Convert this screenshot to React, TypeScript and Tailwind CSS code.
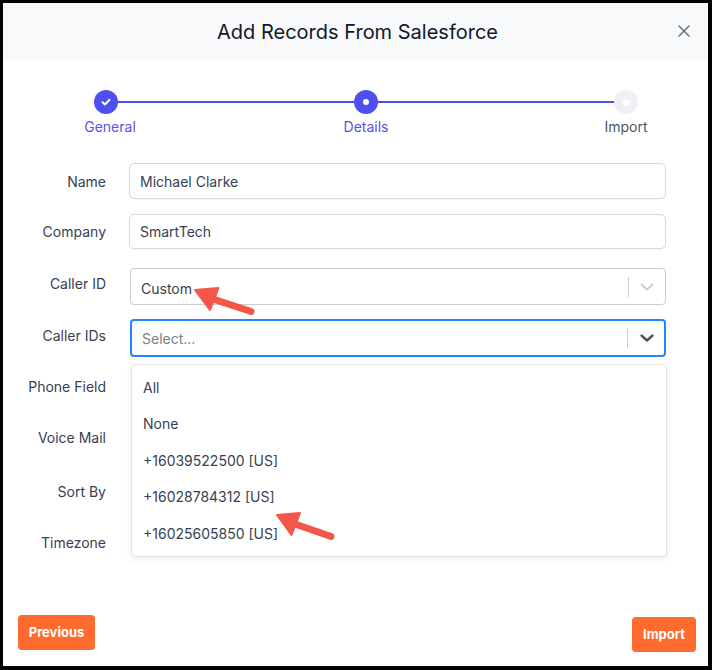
import React from "react";

const font = { fontFamily: "Inter, 'Noto Sans', sans-serif" };

function Chevron({ dark }: { dark?: boolean }) {
  return (
    <svg width="20" height="20" viewBox="0 0 20 20" className={dark ? "text-[#555]" : "text-[#ccc]"}>
      <path
        d="M4.5 7.5 L10 12.5 L15.5 7.5"
        fill="none"
        stroke="currentColor"
        strokeWidth={dark ? 2.4 : 1.8}
        strokeLinecap="round"
        strokeLinejoin="round"
      />
    </svg>
  );
}

function Row({
  label,
  children,
  className,
  labelClass,
}: {
  label: string;
  children?: React.ReactNode;
  className?: string;
  labelClass?: string;
}) {
  return (
    <div className={`grid grid-cols-[103px_1fr] gap-x-[23px] items-center ${className ?? ""}`}>
      <label className={`text-right text-[14px] text-[#374151] ${labelClass ?? ""}`}>{label}</label>
      {children}
    </div>
  );
}

const options = ["All", "None", "+16039522500 [US]", "+16028784312 [US]", "+16025605850 [US]"];

export default function App() {
  return (
    <div style={font} className="w-[712px] h-[670px] bg-black pt-[3px] pl-[3px] pr-[4px] pb-[4px]">
      <div className="relative w-full h-full bg-white flex flex-col">
        {/* Header */}
        <div className="h-[58px] bg-[#f8f9fb] flex items-center justify-center relative shrink-0">
          <h1 className="text-[20px] text-[#111827] pl-[4px]">Add Records From Salesforce</h1>
          <button className="absolute right-[16px] top-[20px] text-[#6b7280]">
            <svg width="16" height="16" viewBox="0 0 16 16">
              <path d="M3 3 L13 13 M13 3 L3 13" stroke="currentColor" strokeWidth="1.5" strokeLinecap="round" />
            </svg>
          </button>
        </div>

        {/* Stepper */}
        <div className="relative mt-[29px] h-[24px] ml-[91px] mr-[70px]">
          <div className="absolute left-[12px] right-[12px] top-[11px] h-[2px] bg-[#4f4ff0]" />
          <div className="relative flex justify-between">
            <div className="w-[24px] h-[24px] rounded-full bg-[#4f4ff0] flex items-center justify-center">
              <svg width="12" height="12" viewBox="0 0 12 12">
                <path d="M2.5 6.2 L5 8.5 L9.5 3.8" fill="none" stroke="white" strokeWidth="2" strokeLinecap="round" strokeLinejoin="round" />
              </svg>
            </div>
            <div className="w-[24px] h-[24px] rounded-full bg-[#4f4ff0] flex items-center justify-center">
              <div className="w-[6px] h-[6px] rounded-full bg-white" />
            </div>
            <div className="w-[24px] h-[24px] rounded-full bg-[#eef0f5] flex items-center justify-center">
              <div className="w-[7px] h-[7px] rounded-full bg-white" />
            </div>
          </div>
        </div>
        <div className="relative h-[20px] mt-[2px] ml-[91px] mr-[70px] text-[14px]">
          <span className="absolute left-[16px] -translate-x-1/2 text-[#5b52e8]">General</span>
          <span className="absolute left-1/2 -translate-x-1/2 text-[#5b52e8]">Details</span>
          <span className="absolute right-[12px] translate-x-1/2 text-[#4b5563]">Import</span>
        </div>

        {/* Form */}
        <div className="mt-[27px] pr-[42px] flex flex-col">
          <Row label="Name">
            <div className="h-[36px] border border-[#d6d9de] rounded-[5px] flex items-center px-[10px] text-[14px] text-[#374151] shadow-[0_1px_1px_rgba(0,0,0,0.04)]">
              Michael Clarke
            </div>
          </Row>
          <Row label="Company" className="mt-[15px]">
            <div className="h-[35px] border border-[#d6d9de] rounded-[5px] flex items-center px-[10px] text-[14px] text-[#374151] shadow-[0_1px_1px_rgba(0,0,0,0.04)]">
              SmartTech
            </div>
          </Row>
          <Row label="Caller ID" className="mt-[19px]" labelClass="-translate-y-[3px]">
            <div className="h-[37px] ml-[1px] border border-[#cccccc] rounded-[4px] flex items-center text-[14px] text-[#374151]">
              <span className="flex-1 px-[10px] pt-[4px]">Custom</span>
              <span className="w-px h-[20px] bg-[#cccccc]" />
              <span className="w-[36px] flex items-center justify-center">
                <Chevron />
              </span>
            </div>
          </Row>
          <Row label="Caller IDs" className="mt-[14px]" labelClass="-translate-y-[3px]">
            <div className="h-[38px] ml-[1px] border-2 border-[#2684ff] rounded-[4px] flex items-center text-[14px]">
              <span className="flex-1 px-[10px] text-[#808080]">Select...</span>
              <span className="w-px h-[20px] bg-[#cccccc]" />
              <span className="w-[36px] flex items-center justify-center pl-[2px]">
                <Chevron dark />
              </span>
            </div>
          </Row>
          <Row label="Phone Field" className="mt-[11px] h-[36px]" />
          <Row label="Voice Mail" className="mt-[15px] h-[36px]" />
          <Row label="Sort By" className="mt-[18px] h-[36px]" />
          <Row label="Timezone" className="mt-[15px] h-[36px]" />
        </div>

        {/* Dropdown menu */}
        <div className="absolute left-[128px] top-[361px] w-[536px] h-[193px] bg-white border border-[#e3e5e8] rounded-[4px] shadow-[0_2px_6px_rgba(0,0,0,0.08)] pt-[4px] pb-[6px]">
          {options.map((o) => (
            <div key={o} className="h-[36.5px] flex items-center px-[11px] text-[14px] text-[#374151]">
              {o}
            </div>
          ))}
        </div>

        {/* Footer */}
        <div className="mt-auto mb-[14px] flex justify-between items-start pl-[15px] pr-[12px]">
          <button className="w-[77px] h-[35px] rounded-[4px] bg-[#ff6a2e] text-white text-[13px] font-bold">
            Previous
          </button>
          <button className="mt-[2px] w-[64px] h-[35px] rounded-[4px] bg-[#ff6a2e] text-white text-[13px] font-bold">
            Import
          </button>
        </div>

        {/* Annotation arrows */}
        <svg className="absolute left-0 top-0 pointer-events-none" width="705" height="663" viewBox="3 3 705 663">
          <g fill="#f4574a" stroke="#f4574a" strokeLinecap="round" strokeLinejoin="round">
            <line x1="213" y1="299" x2="251" y2="311.5" strokeWidth="7" />
            <polygon points="195,290 218.5,288 210,310" strokeWidth="2" />
            <line x1="295" y1="524" x2="331" y2="536.5" strokeWidth="7" />
            <polygon points="277,515 300,513 291.5,535" strokeWidth="2" />
          </g>
        </svg>
      </div>
    </div>
  );
}
